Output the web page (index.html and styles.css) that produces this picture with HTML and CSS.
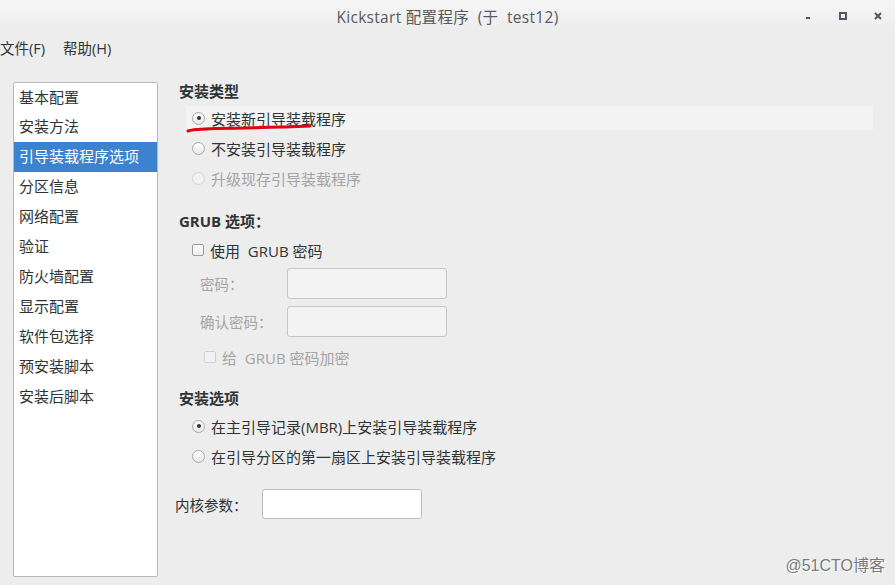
FILE: index.html
```html
<!DOCTYPE html>
<html lang="zh-CN">
<head>
<meta charset="utf-8">
<title>Kickstart 配置程序</title>
<link rel="stylesheet" href="styles.css">
</head>
<body>
<div class="window">
  <header class="titlebar">
    <div class="tb-spacer"></div>
    <div class="tb-title">Kickstart 配置程序 &nbsp;(于&nbsp; test12)</div>
    <div class="tb-controls">
      <span class="ctl ctl-min"><svg width="8" height="8" viewBox="0 0 8 8"><rect x="2" y="5" width="4" height="2" fill="#4d5862"/></svg></span>
      <span class="ctl ctl-max"><svg width="8" height="8" viewBox="0 0 8 8"><rect x="1" y="1" width="6" height="6" fill="none" stroke="#4d5862" stroke-width="2"/></svg></span>
      <span class="ctl ctl-close"><svg width="8" height="8" viewBox="0 0 8 8"><path d="M1 1 L7 7 M7 1 L1 7" stroke="#4d5862" stroke-width="2"/></svg></span>
    </div>
  </header>
  <nav class="menubar">
    <span class="menu-item">文件(F)</span>
    <span class="menu-item">帮助(H)</span>
  </nav>
  <main class="main">
    <ul class="sidebar">
      <li class="side-item">基本配置</li>
      <li class="side-item">安装方法</li>
      <li class="side-item selected">引导装载程序选项</li>
      <li class="side-item">分区信息</li>
      <li class="side-item">网络配置</li>
      <li class="side-item">验证</li>
      <li class="side-item">防火墙配置</li>
      <li class="side-item">显示配置</li>
      <li class="side-item">软件包选择</li>
      <li class="side-item">预安装脚本</li>
      <li class="side-item">安装后脚本</li>
    </ul>
    <section class="content">
      <h2 class="heading">安装类型</h2>
      <div class="opt-row hover">
        <span class="radio checked"></span><span class="opt-label">安装新引导装载程序</span>
        <svg class="annot" width="130" height="9" viewBox="0 0 130 9"><path d="M2 7 C 6 5.5, 14 5, 30 4.5 C 60 4, 90 3.5, 124 2" stroke="#e3000f" stroke-width="3" fill="none" stroke-linecap="round"/></svg>
      </div>
      <div class="opt-row">
        <span class="radio"></span><span class="opt-label">不安装引导装载程序</span>
      </div>
      <div class="opt-row disabled">
        <span class="radio"></span><span class="opt-label">升级现存引导装载程序</span>
      </div>

      <h2 class="heading heading-grub">GRUB 选项：</h2>
      <div class="opt-row check-row">
        <span class="checkbox"></span><span class="opt-label">使用&nbsp; GRUB 密码</span>
      </div>
      <div class="field-row first-field">
        <span class="field-label">密码：</span>
        <span class="input disabled-input"></span>
      </div>
      <div class="field-row">
        <span class="field-label">确认密码：</span>
        <span class="input disabled-input"></span>
      </div>
      <div class="opt-row sub-check disabled">
        <span class="checkbox"></span><span class="opt-label">给&nbsp; GRUB 密码加密</span>
      </div>

      <h2 class="heading heading-install">安装选项</h2>
      <div class="opt-row">
        <span class="radio checked"></span><span class="opt-label">在主引导记录(MBR)上安装引导装载程序</span>
      </div>
      <div class="opt-row">
        <span class="radio"></span><span class="opt-label">在引导分区的第一扇区上安装引导装载程序</span>
      </div>

      <div class="kernel-row">
        <span class="kernel-label">内核参数：</span>
        <span class="input kernel-input"></span>
      </div>
    </section>
  </main>
  <div class="watermark">@51CTO博客</div>
</div>
</body>
</html>
```

FILE: styles.css
```css
* { box-sizing: border-box; }
html, body {
  margin: 0;
  padding: 0;
  width: 895px;
  height: 585px;
  overflow: hidden;
  background: #ededed;
  font-family: "Open Sans", "Noto Sans CJK SC", sans-serif;
  color: #2e3436;
}
.window {
  position: relative;
  width: 895px;
  height: 585px;
  background: #ededed;
}
.titlebar {
  height: 32px;
  display: grid;
  grid-template-columns: 1fr auto 1fr;
  align-items: center;
  background: linear-gradient(#f6f6f6, #ececec);
}
.tb-title {
  font-size: 15.5px;
  color: #555a5e;
  letter-spacing: 0.3px;
  white-space: nowrap;
}
.tb-controls {
  display: flex;
  justify-content: flex-end;
  align-items: center;
  padding-right: 0;
}
.ctl {
  width: 35px;
  height: 16px;
  display: flex;
  align-items: center;
  justify-content: center;
}
.menubar {
  height: 30px;
  display: flex;
  align-items: center;
  gap: 18px;
  font-size: 14.5px;
  padding-left: 0;
  color: #2e3436;
}
.main {
  display: flex;
  align-items: flex-start;
  padding: 20px 0 0 13px;
}
.sidebar {
  list-style: none;
  margin: 0;
  padding: 0;
  width: 145px;
  height: 495px;
  background: #fff;
  border: 1px solid #b8b8b8;
  border-radius: 2px;
  font-family: "Noto Sans CJK SC", sans-serif;
  font-size: 15px;
  flex: none;
}
.side-item {
  height: 30px;
  line-height: 28px;
  padding-left: 5px;
  color: #2e3436;
  white-space: nowrap;
}
.side-item:first-child { height: 29px; line-height: 27px; }
.side-item.selected {
  background: #3d82cf;
  color: #fff;
}
.content {
  flex: 1;
  padding-left: 21px;
  padding-right: 22px;
  font-size: 15px;
}
.heading {
  margin: 0;
  height: 18px;
  line-height: 18px;
  font-size: 15px;
  font-weight: bold;
  font-family: "Noto Sans CJK SC", sans-serif;
  color: #2e3436;
}
.heading-grub { margin-top: 22px; font-family: "Open Sans", "Noto Sans CJK SC", sans-serif; }
.heading-install { margin-top: 20px; }
.opt-row {
  position: relative;
  height: 24px;
  margin-top: 6px;
  margin-left: 7px;
  padding-left: 6px;
  display: flex;
  align-items: center;
  white-space: nowrap;
}
.heading + .opt-row { margin-top: 6px; }
.heading-grub + .opt-row { margin-top: 8px; }
.heading-install + .opt-row { margin-top: 7px; }
.opt-row.hover { background: #f3f3f3; }
.opt-label {
  margin-left: 6px;
  font-family: "Open Sans", "Noto Sans CJK SC", sans-serif;
}
.disabled .opt-label { color: #a4a4a4; }
.radio {
  width: 13px;
  height: 13px;
  border-radius: 50%;
  border: 1px solid #a9a9a9;
  background: linear-gradient(#ffffff, #e8e8e8);
  display: inline-flex;
  align-items: center;
  justify-content: center;
  flex: none;
}
.radio.checked::after {
  content: "";
  width: 4px;
  height: 4px;
  border-radius: 50%;
  background: #2e3436;
}
.disabled .radio { border-color: #d4d4d4; background: #f2f2f2; }
.checkbox {
  width: 12px;
  height: 12px;
  border-radius: 2px;
  border: 1px solid #9a9a9a;
  background: linear-gradient(#ffffff, #ececec);
  flex: none;
}
.disabled .checkbox { border-color: #cfcfcf; background: #f2f2f2; }
.annot {
  position: absolute;
  left: 0;
  top: 18px;
  pointer-events: none;
}
.field-row {
  display: flex;
  align-items: center;
  height: 31px;
  margin-top: 7px;
  padding-left: 21px;
}
.first-field { margin-top: 6px; }
.field-label {
  width: 87px;
  color: #a4a4a4;
  font-family: "Noto Sans CJK SC", sans-serif;
  font-size: 14.5px;
}
.input {
  width: 160px;
  height: 31px;
  border-radius: 3px;
  display: block;
}
.disabled-input {
  background: #f3f3f3;
  border: 1px solid #c6c6c6;
}
.sub-check {
  margin-top: 8px;
  padding-left: 18px;
}
.kernel-row {
  display: flex;
  align-items: center;
  margin-top: 21px;
  margin-left: -4px;
  height: 30px;
}
.kernel-label {
  width: 87px;
  font-family: "Noto Sans CJK SC", sans-serif;
  font-size: 14.5px;
  color: #2e3436;
}
.kernel-input {
  height: 30px;
  background: #fff;
  border: 1px solid #bcbcbc;
}
.watermark {
  position: absolute;
  right: 10px;
  bottom: 9px;
  font-size: 16px;
  color: #7a7a7a;
  font-family: "Liberation Sans", "Noto Sans CJK SC", sans-serif;
  text-shadow: 1px 1px 0 #fff;
}
```
